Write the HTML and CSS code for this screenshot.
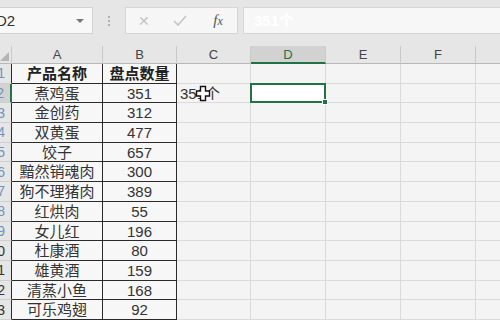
FILE: index.html
```html
<!DOCTYPE html>
<html lang="zh">
<head>
    <meta charset="UTF-8">
    <title>盘点</title>
    <link rel="stylesheet" href="styles.css">
</head>
<body>
    <!-- Barra della formula -->
    <div class="toolbar">
        <div class="namebox">
            <span class="cellref">D2</span>
            <span class="drop"></span>
        </div>
        <div class="grip"><i></i><i></i><i></i></div>
        <div class="fbuttons">
            <span class="fbtn cancel">&#x2715;</span>
            <span class="fbtn ok">
                <svg width="14" height="11" viewBox="0 0 14 11"><path d="M1 6 L5 10 L13 1" fill="none" stroke="#c4c4c4" stroke-width="1.6"/></svg>
            </span>
            <span class="fbtn fx"><i>f</i><i class="x">x</i></span>
        </div>
        <div class="formula">351个</div>
    </div>

    <!-- Foglio -->
    <div class="sheet">
        <div class="h corner"><span class="tri"></span></div>
        <div class="h">A</div>
        <div class="h">B</div>
        <div class="h">C</div>
        <div class="h sel">D</div>
        <div class="h">E</div>
        <div class="h">F</div>
        <div class="h last"></div>

        <div class="rh lt"><span>1</span></div>
        <div class="c t b">产品名称</div>
        <div class="c t b">盘点数量</div>
        <div class="c"></div><div class="c"></div><div class="c"></div><div class="c"></div><div class="c last"></div>

        <div class="rh lt sel"><span>2</span></div>
        <div class="c t">煮鸡蛋</div>
        <div class="c t">351</div>
        <div class="c over">
            <span class="spill">351个</span>
            <svg class="cursor" width="16" height="17" viewBox="0 0 16 17"><path d="M5.5 1.5 H10.5 V6 H14.5 V11 H10.5 V15.5 H5.5 V11 H1.5 V6 H5.5 Z" fill="#fff" stroke="#111" stroke-width="1.4"/></svg>
        </div>
        <div class="c active"><span class="selbox"><span class="handle"></span></span></div>
        <div class="c"></div><div class="c"></div><div class="c last"></div>

        <div class="rh lt"><span>3</span></div>
        <div class="c t">金创药</div><div class="c t">312</div>
        <div class="c"></div><div class="c"></div><div class="c"></div><div class="c"></div><div class="c last"></div>

        <div class="rh lt"><span>4</span></div>
        <div class="c t">双黄蛋</div><div class="c t">477</div>
        <div class="c"></div><div class="c"></div><div class="c"></div><div class="c"></div><div class="c last"></div>

        <div class="rh lt"><span>5</span></div>
        <div class="c t">饺子</div><div class="c t">657</div>
        <div class="c"></div><div class="c"></div><div class="c"></div><div class="c"></div><div class="c last"></div>

        <div class="rh lt"><span>6</span></div>
        <div class="c t">黯然销魂肉</div><div class="c t">300</div>
        <div class="c"></div><div class="c"></div><div class="c"></div><div class="c"></div><div class="c last"></div>

        <div class="rh lt"><span>7</span></div>
        <div class="c t">狗不理猪肉</div><div class="c t">389</div>
        <div class="c"></div><div class="c"></div><div class="c"></div><div class="c"></div><div class="c last"></div>

        <div class="rh lt"><span>8</span></div>
        <div class="c t">红烘肉</div><div class="c t">55</div>
        <div class="c"></div><div class="c"></div><div class="c"></div><div class="c"></div><div class="c last"></div>

        <div class="rh lt"><span>9</span></div>
        <div class="c t">女儿红</div><div class="c t">196</div>
        <div class="c"></div><div class="c"></div><div class="c"></div><div class="c"></div><div class="c last"></div>

        <div class="rh"><span>10</span></div>
        <div class="c t">杜康酒</div><div class="c t">80</div>
        <div class="c"></div><div class="c"></div><div class="c"></div><div class="c"></div><div class="c last"></div>

        <div class="rh"><span>11</span></div>
        <div class="c t">雄黄酒</div><div class="c t">159</div>
        <div class="c"></div><div class="c"></div><div class="c"></div><div class="c"></div><div class="c last"></div>

        <div class="rh"><span>12</span></div>
        <div class="c t">清蒸小鱼</div><div class="c t">168</div>
        <div class="c"></div><div class="c"></div><div class="c"></div><div class="c"></div><div class="c last"></div>

        <div class="rh"><span>13</span></div>
        <div class="c t">可乐鸡翅</div><div class="c t">92</div>
        <div class="c"></div><div class="c"></div><div class="c"></div><div class="c"></div><div class="c last"></div>
    </div>
</body>
</html>
```

FILE: styles.css
```css
* {
    box-sizing: border-box;
}
body {
    margin: 0;
    width: 500px;
    height: 320px;
    overflow: hidden;
    background-color: #f4f4f4;
    font-family: "Liberation Sans", "Noto Sans CJK SC", sans-serif;
    color: #333;
}

/* Barra superiore */
.toolbar {
    height: 46px;
    background-color: #e6e6e6;
    display: flex;
    align-items: flex-start;
    padding-top: 7px;
}
.namebox {
    width: 93px;
    height: 27px;
    background-color: #f8f8f8;
    border: 1px solid #d2d2d2;
    border-left: none;
    display: flex;
    align-items: center;
    justify-content: space-between;
    padding-right: 8px;
    overflow: hidden;
}
.cellref {
    margin-left: -4px;
    font-size: 15px;
    color: #333;
}
.drop {
    width: 0;
    height: 0;
    border-left: 4px solid transparent;
    border-right: 4px solid transparent;
    border-top: 4px solid #777;
}
.grip {
    width: 32px;
    height: 27px;
    display: flex;
    flex-direction: column;
    align-items: center;
    justify-content: center;
    gap: 2px;
}
.grip i {
    width: 2px;
    height: 2px;
    background-color: #b0b0b0;
}
.fbuttons {
    width: 113px;
    height: 27px;
    background-color: #f6f6f6;
    border: 1px solid #d6d6d6;
    display: flex;
    align-items: center;
}
.fbtn {
    width: 36px;
    text-align: center;
    color: #c4c4c4;
    font-size: 14px;
    line-height: 14px;
}
.fbtn.ok {
    display: flex;
    justify-content: center;
}
.fbtn.fx {
    font-family: "Liberation Serif", serif;
    font-size: 15px;
    color: #555;
    margin-left: 2px;
}
.fbtn.fx .x {
    font-size: 12px;
}
.formula {
    flex: 1;
    height: 27px;
    margin-left: 5px;
    background-color: #f7f7f7;
    border: 1px solid #d6d6d6;
    border-right: none;
    color: #fff;
    font-weight: bold;
    font-size: 15px;
    line-height: 25px;
    padding-left: 10px;
}

/* Griglia */
.sheet {
    display: grid;
    grid-template-columns: 12px 91px 74px 74px 75px 75px 75px 24px;
    grid-template-rows: 18px repeat(13, 19.7px);
}
.h {
    background-color: #e6e6e6;
    border-right: 1px solid #c9c9c9;
    border-bottom: 1px solid #b8b8b8;
    font-size: 13px;
    line-height: 17px;
    text-align: center;
    color: #444;
}
.h.sel {
    background-color: #d2d2d2;
    border-bottom: 2px solid #217346;
    color: #217346;
}
.h.last {
    border-right: none;
}
.corner {
    position: relative;
}
.tri {
    position: absolute;
    right: 2px;
    bottom: 2px;
    width: 0;
    height: 0;
    border-left: 9px solid transparent;
    border-bottom: 9px solid #b5b5b5;
}
.rh {
    background-color: #e6e6e6;
    border-right: 1px solid #2a2a2a;
    border-bottom: 1px solid #cfcfcf;
    display: flex;
    justify-content: flex-end;
    align-items: center;
    padding-right: 6px;
    font-size: 14px;
    color: #333;
    white-space: nowrap;
}
.rh.lt {
    color: #6f93bf;
}
.rh.sel {
    background-color: #d2d2d2;
    border-right: 2px solid #217346;
}
.c {
    border-right: 1px solid #dadada;
    border-bottom: 1px solid #dadada;
    font-size: 15px;
    line-height: 19px;
    text-align: center;
    white-space: nowrap;
}
.c.last {
    border-right: none;
}
.c.t {
    background-color: #f7f7f7;
    border-right: 1px solid #2a2a2a;
    border-bottom: 1px solid #2a2a2a;
    color: #333;
}
.c.b {
    font-weight: bold;
    color: #222;
}

/* Testo che sborda e cursore */
.over {
    position: relative;
    text-align: left;
}
.spill {
    padding-left: 3px;
    color: #333;
}
.cursor {
    position: absolute;
    left: 18px;
    top: 1px;
}

/* Cella attiva */
.active {
    position: relative;
}
.selbox {
    position: absolute;
    left: -1px;
    top: -1px;
    right: -1px;
    bottom: -1px;
    border: 2px solid #217346;
    background-color: #fff;
}
.handle {
    position: absolute;
    right: -4px;
    bottom: -4px;
    width: 6px;
    height: 6px;
    background-color: #217346;
    border: 1px solid #fff;
}
```
